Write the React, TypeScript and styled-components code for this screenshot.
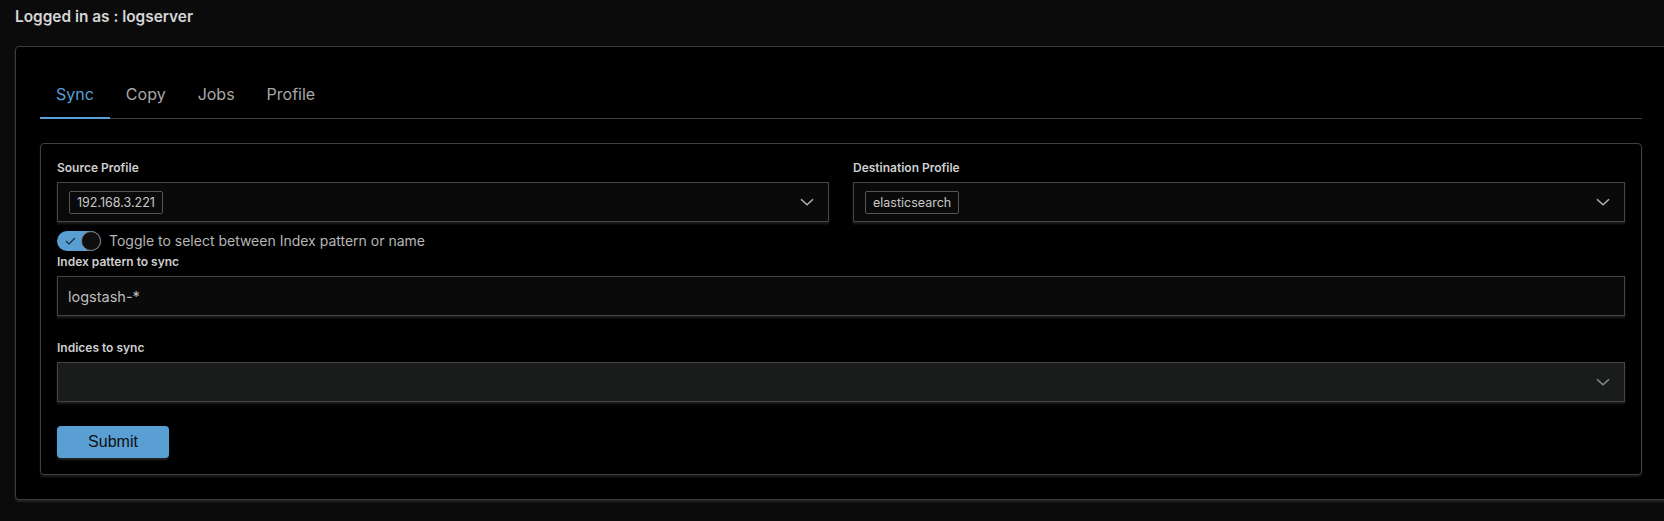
import React, { useState } from "react";
import styled, { createGlobalStyle } from "styled-components";

const GlobalStyle = createGlobalStyle`
  html, body {
    margin: 0;
    padding: 0;
    background: #0b0b0b;
    overflow: hidden;
  }
  body {
    font-family: Inter, "Noto Sans", sans-serif;
    color: #d0d0d0;
  }
  * { box-sizing: border-box; }
`;

const Page = styled.div`
  padding: 8px 0 22px 15px;
  width: 1664px;
`;

const Header = styled.div`
  font-size: 15.4px;
  font-weight: 600;
  line-height: 18px;
  color: #d6d6d6;
  margin-bottom: 20px;
`;

const OuterCard = styled.div`
  width: 1652px;
  background: #000;
  border: 1px solid #3d3d3d;
  border-radius: 4px;
  padding: 24px;
  box-shadow: 0 2px 2px rgba(80, 80, 80, 0.35);
`;

const TabList = styled.div`
  display: flex;
  border-bottom: 1px solid #3f3f3f;
  height: 48px;
`;

const Tab = styled.button<{ $active?: boolean }>`
  background: none;
  border: none;
  padding: 0 16px;
  height: 48px;
  margin-bottom: -1px;
  font-family: Inter, sans-serif;
  font-size: 16px;
  color: ${(p) => (p.$active ? "#5a9fd6" : "#a8a8a8")};
  border-bottom: 2px solid ${(p) => (p.$active ? "#5a9fd6" : "transparent")};
  cursor: pointer;
`;

const InnerCard = styled.div`
  margin-top: 24px;
  border: 1px solid #3f3f3f;
  border-radius: 4px;
  padding: 16px;
  background: #000;
  box-shadow: 0 2px 2px rgba(80, 80, 80, 0.35);
`;

const TwoCols = styled.div`
  display: grid;
  grid-template-columns: 1fr 1fr;
  column-gap: 24px;
`;

const Field = styled.div`
  display: flex;
  flex-direction: column;
`;

const Label = styled.label<{ $top?: number }>`
  font-size: 12px;
  font-weight: 600;
  line-height: 16px;
  color: #cfcfcf;
  margin-top: ${(p) => p.$top ?? 0}px;
  margin-bottom: 6px;
`;

const SelectBox = styled.div<{ $filled?: boolean }>`
  height: 40px;
  display: flex;
  align-items: center;
  justify-content: space-between;
  padding: 0 12px 0 11px;
  background: ${(p) => (p.$filled ? "#1a1b1b" : "#0a0a0a")};
  border: 1px solid #454545;
  box-shadow: 0 2px 2px rgba(60, 60, 60, 0.5);
`;

const Chip = styled.span`
  display: inline-flex;
  align-items: center;
  height: 23px;
  padding: 0 7px;
  border: 1px solid #555;
  border-radius: 2px;
  font-size: 12.5px;
  color: #c8c8c8;
`;

const Chevron = styled.svg<{ $dim?: boolean }>`
  width: 14px;
  height: 8px;
  stroke: ${(p) => (p.$dim ? "#8a8a8a" : "#b0b0b0")};
  margin-right: 2px;
`;

const ToggleRow = styled.div`
  display: flex;
  align-items: center;
  gap: 8px;
  margin-top: 8px;
  height: 21px;
`;

const Track = styled.div`
  position: relative;
  width: 44px;
  height: 20px;
  border-radius: 10px;
  background: #5a9fd4;
`;

const Knob = styled.div`
  position: absolute;
  right: 0;
  top: 0;
  width: 20px;
  height: 20px;
  border-radius: 50%;
  background: #0e0e0e;
  border: 1.5px solid #7d7d7d;
`;

const CheckIcon = styled.svg`
  position: absolute;
  left: 8px;
  top: 6px;
  width: 11px;
  height: 8px;
`;

const ToggleText = styled.span`
  font-size: 14px;
  color: #b6b6b6;
  line-height: 20px;
`;

const TextInput = styled.div`
  height: 40px;
  display: flex;
  align-items: center;
  padding: 0 10px;
  background: #0a0a0a;
  border: 1px solid #454545;
  box-shadow: 0 2px 2px rgba(60, 60, 60, 0.5);
  font-size: 14.5px;
  color: #bdbdbd;
`;

const SubmitButton = styled.button`
  margin-top: 24px;
  width: 112px;
  height: 32px;
  background: #5a9fd4;
  border: none;
  border-radius: 4px;
  font-family: "Liberation Sans", Arial, sans-serif;
  font-size: 16px;
  color: #111;
  box-shadow: 0 2px 2px rgba(60, 60, 60, 0.6);
  cursor: pointer;
`;

const ChevronDown = ({ dim }: { dim?: boolean }) => (
  <Chevron $dim={dim} viewBox="0 0 14 8" fill="none" strokeWidth="1.5">
    <path d="M1 1.2 L7 6.8 L13 1.2" />
  </Chevron>
);

export default function App() {
  const [tab, setTab] = useState("Sync");
  const tabs = ["Sync", "Copy", "Jobs", "Profile"];
  return (
    <>
      <GlobalStyle />
      <Page>
        <Header>Logged in as : logserver</Header>
        <OuterCard>
          <TabList>
            {tabs.map((t) => (
              <Tab key={t} $active={t === tab} onClick={() => setTab(t)}>
                {t}
              </Tab>
            ))}
          </TabList>
          <InnerCard>
            <TwoCols>
              <Field>
                <Label>Source Profile</Label>
                <SelectBox>
                  <Chip>192.168.3.221</Chip>
                  <ChevronDown />
                </SelectBox>
              </Field>
              <Field>
                <Label>Destination Profile</Label>
                <SelectBox>
                  <Chip>elasticsearch</Chip>
                  <ChevronDown />
                </SelectBox>
              </Field>
            </TwoCols>
            <ToggleRow>
              <Track>
                <CheckIcon viewBox="0 0 11 8" fill="none" stroke="#1a2a38" strokeWidth="1.2">
                  <path d="M1 4 L4 7 L10 1" />
                </CheckIcon>
                <Knob />
              </Track>
              <ToggleText>Toggle to select between Index pattern or name</ToggleText>
            </ToggleRow>
            <Field>
              <Label $top={3}>Index pattern to sync</Label>
              <TextInput>logstash-*</TextInput>
            </Field>
            <Field>
              <Label $top={24}>Indices to sync</Label>
              <SelectBox $filled>
                <span />
                <ChevronDown dim />
              </SelectBox>
            </Field>
            <SubmitButton>Submit</SubmitButton>
          </InnerCard>
        </OuterCard>
      </Page>
    </>
  );
}
